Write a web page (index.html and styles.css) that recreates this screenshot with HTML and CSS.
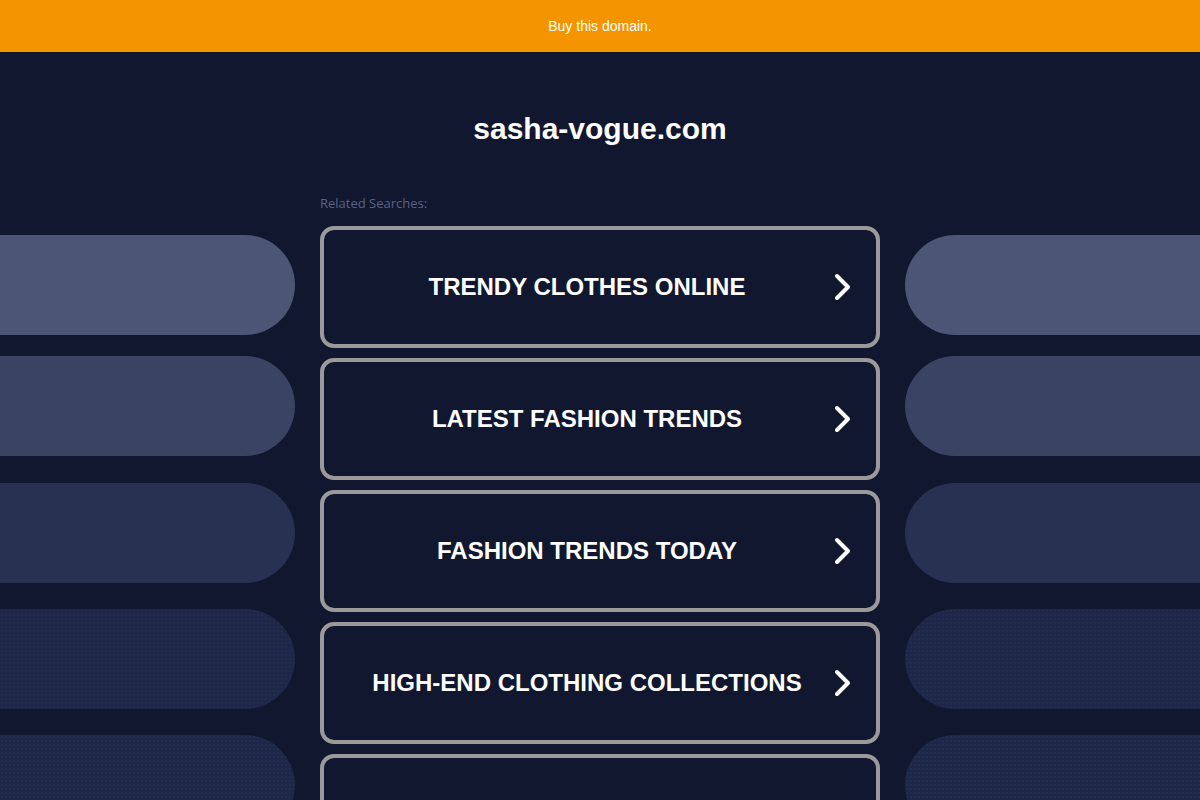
FILE: index.html
```html
<!DOCTYPE html>
<html lang="en">
<head>
<meta charset="utf-8">
<title>sasha-vogue.com</title>
<link rel="stylesheet" href="styles.css">
</head>
<body>
<div class="topbar"><a class="buy" href="#">Buy this domain.</a></div>
<div class="page">
  <h1 class="domain">sasha-vogue.com</h1>
  <div class="layout">
    <div class="side side-left">
      <div class="pill p1"></div>
      <div class="pill p2"></div>
      <div class="pill p3"></div>
      <div class="pill p4 dotted"></div>
      <div class="pill p5 dotted"></div>
    </div>
    <div class="center">
      <div class="related">Related Searches:</div>
      <div class="links">
        <a class="link" href="#"><span class="label">TRENDY CLOTHES ONLINE</span><svg class="chev" viewBox="0 0 18 28" width="18" height="28"><path d="M3 3 L14 14 L3 25" fill="none" stroke="#fff" stroke-width="4" stroke-linecap="round" stroke-linejoin="round"/></svg></a>
        <a class="link" href="#"><span class="label">LATEST FASHION TRENDS</span><svg class="chev" viewBox="0 0 18 28" width="18" height="28"><path d="M3 3 L14 14 L3 25" fill="none" stroke="#fff" stroke-width="4" stroke-linecap="round" stroke-linejoin="round"/></svg></a>
        <a class="link" href="#"><span class="label">FASHION TRENDS TODAY</span><svg class="chev" viewBox="0 0 18 28" width="18" height="28"><path d="M3 3 L14 14 L3 25" fill="none" stroke="#fff" stroke-width="4" stroke-linecap="round" stroke-linejoin="round"/></svg></a>
        <a class="link" href="#"><span class="label">HIGH-END CLOTHING COLLECTIONS</span><svg class="chev" viewBox="0 0 18 28" width="18" height="28"><path d="M3 3 L14 14 L3 25" fill="none" stroke="#fff" stroke-width="4" stroke-linecap="round" stroke-linejoin="round"/></svg></a>
        <a class="link" href="#"></a>
      </div>
    </div>
    <div class="side side-right">
      <div class="pill p1"></div>
      <div class="pill p2"></div>
      <div class="pill p3"></div>
      <div class="pill p4 dotted"></div>
      <div class="pill p5 dotted"></div>
    </div>
  </div>
</div>
</body>
</html>
```

FILE: styles.css
```css
html, body {
  margin: 0;
  padding: 0;
  background: #11172e;
  overflow: hidden;
}
body {
  font-family: "Liberation Sans", Arial, sans-serif;
  color: #fff;
  height: 800px;
}
.topbar {
  height: 52px;
  background: #f39400;
  display: flex;
  align-items: center;
  justify-content: center;
}
.buy {
  color: #fff;
  font-size: 14px;
  text-decoration: none;
}
.page {
  padding-top: 57px;
}
.domain {
  margin: 0;
  text-align: center;
  font-size: 30px;
  line-height: 40px;
  font-weight: bold;
  color: #fff;
}
.layout {
  display: grid;
  grid-template-columns: 295px 560px 295px;
  column-gap: 25px;
  margin-top: 46px;
}
.side {
  display: flex;
  flex-direction: column;
  padding-top: 40px;
}
.pill {
  height: 100px;
  flex: none;
}
.side-left .pill {
  border-radius: 0 50px 50px 0;
}
.side-right .pill {
  border-radius: 50px 0 0 50px;
}
.p1 { background-color: #4c5574; }
.p2 { background-color: #3a4361; margin-top: 21px; }
.p3 { background-color: #283152; margin-top: 27px; }
.p4 { background-color: #1e2747; margin-top: 26px; }
.p5 { background-color: #1d2849; margin-top: 26px; }
.dotted {
  background-image: radial-gradient(rgba(70, 85, 130, 0.18) 0.6px, transparent 0.9px);
  background-size: 4px 4px;
}
.center {
  display: flex;
  flex-direction: column;
}
.related {
  font-family: "Open Sans", "Noto Sans", sans-serif;
  font-size: 13px;
  line-height: 16px;
  color: #5b6486;
  margin-bottom: 15px;
}
.links {
  display: flex;
  flex-direction: column;
  gap: 10px;
}
.link {
  box-sizing: border-box;
  height: 122px;
  border: 4px solid #9a9a9a;
  border-radius: 14px;
  background: #11172e;
  display: flex;
  align-items: center;
  justify-content: center;
  position: relative;
  text-decoration: none;
  color: #fff;
  padding: 0 60px 0 34px;
  flex: none;
}
.label {
  font-size: 24px;
  font-weight: bold;
  line-height: 30px;
  white-space: nowrap;
}
.chev {
  position: absolute;
  right: 24px;
  top: 50%;
  margin-top: -14px;
}
```
